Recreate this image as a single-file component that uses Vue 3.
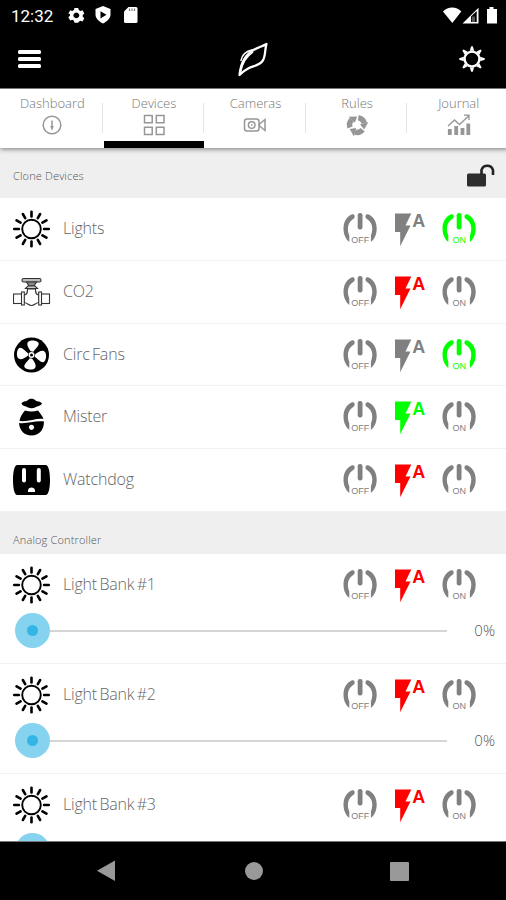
<template>
  <div class="screen">
    <div class="status-bar">
      <span class="clock">12:32</span>
      <svg class="status-left" width="72" height="18" viewBox="0 0 72 18">
        <path fill="#fff" fill-rule="evenodd" d="M6 1h4l.6 2.3 1.8 1 2.2-.7 2 3.3-1.7 1.6v2l1.7 1.6-2 3.4-2.2-.8-1.8 1.1L10 17H6l-.6-2.3-1.8-1-2.2.8-2-3.4 1.7-1.6v-2L-.6 6.9l2-3.3 2.2.7 1.8-1zM8 5.8a3.2 3.2 0 1 0 .01 0z" transform="translate(.9 1) scale(.93)" />
        <path fill="#fff" fill-rule="evenodd" d="M35 0l7.5 3v5.5c0 3.8-3.4 7-7.5 8.900-4.100-1.900-7.500-5.100-7.500-8.900V3zM32.500 5.200v7.200l6-3.600z" />
        <path fill="#fff" d="M60.500 1h7.500a1.500 1.500 0 0 1 1.500 1.500v13a1.500 1.500 0 0 1-1.500 1.500H57.500a1.500 1.500 0 0 1-1.500-1.500V5.500z" />
        <path stroke="#777" stroke-width="1.200" d="M61.500 2.500v2.500M64 2.500v2.500M66.500 2.500v2.500" />
      </svg>
      <svg class="status-right" width="56" height="18" viewBox="0 0 56 18">
        <path fill="#fff" d="M0 4.500C5-.8 13.500-.8 18.300 4.500L9.300 16z" />
        <path fill="#fff" fill-rule="evenodd" d="M19.500 16.500L35.500.7v15.800zM28 9.500V15h5.700V4z" />
        <path fill="#fff" d="M28.800 9.500h3.200V15h-3.200z" opacity=".35" />
        <path fill="#fff" d="M44 2h2.500V0h4v2H54v14.500H44z" />
      </svg>
    </div>

    <header class="header">
      <div class="menu"><i></i><i></i><i></i></div>
      <svg class="leaf" width="34" height="36" viewBox="0 0 34 36">
        <g fill="none" stroke="#fff" stroke-linejoin="round" stroke-linecap="round">
          <path stroke-width="2.300" d="M3.500 34C4.500 24 8 14.500 17.500 9 21 6.800 26 5.500 30.500 3 28.500 9 30 15 26.500 20 23.500 24.500 18 24.500 13 27 9 29 6 31.500 3.500 34z" />
          <path stroke-width="1.500" d="M5 19.500c1-6 5.500-9.500 11.500-10.800M4.500 31C6.500 22 10.500 15.500 16.500 11.500" />
        </g>
      </svg>
      <svg class="gear" width="28" height="28" viewBox="-14 -14 28 28">
        <circle r="7.400" fill="none" stroke="#fff" stroke-width="2.400" />
        <path v-for="n in 8" :key="n" fill="#fff" d="M-2.200 -8.200L-.8 -12.800H.8L2.200 -8.200z" :transform="`rotate(${n * 45})`" />
      </svg>
    </header>

    <nav class="tabs">
      <div v-for="tab in tabs" :key="tab" class="tab" :class="{ active: tab === activeTab }">
        <span class="tab-label">{{ tab }}</span>
        <svg class="tab-icon" width="26" height="24" viewBox="0 0 26 24" fill="none" stroke="#969696" stroke-width="1.500">
          <template v-if="tab === 'Dashboard'">
            <circle cx="13" cy="12" r="8.800" />
            <path d="M13 7.500v7" />
            <path d="M11.300 13h3.400L13 18z" fill="#969696" stroke="none" />
          </template>
          <template v-else-if="tab === 'Devices'">
            <path d="M3.500 2.500h7.700v7.300H3.500zM15.300 2.500H23v7.300h-7.700zM3.500 14.200h7.700v7.300H3.500zM15.300 14.200H23v7.300h-7.700z" />
          </template>
          <template v-else-if="tab === 'Cameras'">
            <rect x="2.500" y="6" width="14.500" height="12" rx="2.500" />
            <circle cx="9.700" cy="12" r="3.300" />
            <path d="M9 12h1.500M17.500 11l5.500-4.500v11L17.500 13z" />
          </template>
          <template v-else-if="tab === 'Rules'">
            <g v-for="n in 3" :key="n" :transform="`translate(13 12) rotate(${n * 120 - 60})`">
              <path d="M-5.700 -4.800A7.500 7.500 0 0 1 2 -7.200" stroke-width="5.400" />
              <path d="M.8 -3L3 -11.400L7.400 -4z" fill="#969696" stroke="none" />
            </g>
          </template>
          <template v-else>
            <path d="M2 13l6.500-6 5 4.500L22.500 3M18 2.200h5V7" stroke-width="1.300" />
            <path d="M3.800 22v-6M10.200 22v-9M16.500 22v-7M22.300 22V10.500" stroke-width="3.800" />
          </template>
        </svg>
      </div>
    </nav>

    <main class="content">
      <template v-for="section in sections" :key="section.title">
        <div class="section-head" :class="{ first: section.lock }">
          <span class="section-title">{{ section.title }}</span>
          <svg v-if="section.lock" class="lock" width="28" height="25" viewBox="0 0 28 25">
            <rect x="0" y="10.500" width="19" height="13" rx="1.500" fill="#2d2d2d" />
            <path d="M14.500 11.500V7a6 6 0 0 1 11.500 0V12" fill="none" stroke="#222" stroke-width="2.600" />
          </svg>
        </div>

        <div v-for="device in section.devices" :key="device.name" class="device" :class="{ analog: section.analog }">
          <div class="device-row">
            <svg class="device-icon" width="38" height="38" viewBox="-18.500 -19 38 38">
              <template v-if="device.icon === 'light'">
                <circle r="9.300" fill="none" stroke="#000" stroke-width="1.900" />
                <path v-for="n in 12" :key="n" d="M0 -12.600V-17.300" stroke="#000" stroke-width="2.600" stroke-linecap="round" :transform="`rotate(${n * 30})`" />
              </template>
              <template v-else-if="device.icon === 'valve'">
                <g fill="#fff" stroke="#333" stroke-width="1.100">
                  <rect x="-18" y="2" width="9" height="9.500" />
                  <rect x="9" y="2" width="9" height="9.500" />
                  <path d="M-7.500 3C-4.500 3-4 1-4-3H4C4 1 4.500 3 7.500 3V10.500C4.500 10.500 3 13.500 0 13.500S-4.500 10.500-7.500 10.500z" />
                  <rect x="-10" y="0" width="2.800" height="13" />
                  <rect x="7.200" y="0" width="2.800" height="13" />
                  <rect x="-9.500" y="-13.500" width="19" height="3.500" rx="1.500" fill="#bbb" />
                  <path d="M-5 -10H5L2.500 -6H-2.500z" fill="#888" />
                  <path d="M-6 -3.500L-3.500 -6H3.500L6 -3.500z" fill="#ccc" />
                </g>
              </template>
              <template v-else-if="device.icon === 'fan'">
                <circle r="17.500" fill="#000" />
                <path v-for="n in 4" :key="n" fill="#fff" d="M-1.200 -3.500C-3.500 -6-6.500 -9-5.500 -12-4 -15.500 4.500 -15.500 5.500 -12.500 6 -9.500 3 -7 1.200 -3.500z" :transform="`rotate(${n * 90 + 8})`" />
                <circle r="3" fill="#fff" />
                <circle r="1.500" fill="#000" />
              </template>
              <template v-else-if="device.icon === 'mister'">
                <path d="M-10 -13.500C-8 -16.500-5 -15-3.500 -17 -2 -18.700 2 -18.700 3.500 -17 5 -15 8 -16.500 10.500 -13.500 9 -10.500 6 -11.500 3.500 -9.500 1.500 -8.500-1.500 -8.500-3.500 -9.500-6 -11.500-9 -10.500-10 -13.500z" />
                <path d="M-6.500 -6.500Q0 -4.500 6.500 -6.500Q11 -1 12 2C4 1-2 5-12 4C-11.500 0-9 -4-6.500 -6.500z" />
                <path fill-rule="evenodd" d="M-12.500 6C-4 7 3 3.500 12.500 4.500 12.500 13 7.500 18.500 0 18.500S-12 13-12.500 6zM0 7.700a2.600 2.600 0 1 0 .01 0z" />
              </template>
              <template v-else>
                <path fill-rule="evenodd" d="M-14 -15H14C17.500 -15 18.500 -7 18.500 0S17.500 15 14 15H-14C-17.500 15-18.500 7-18.500 0S-17.500 -15-14 -15zM-9.500 -10v10.500a2 2 0 0 0 4 0V-10a2 2 0 0 0-4 0zM5.300 -10v10.500a2 2 0 0 0 4 0V-10a2 2 0 0 0-4 0zM-3.500 12H3.500V10.500C3.500 6.500-3.500 6.500-3.500 10.500z" />
              </template>
            </svg>
            <span class="device-name">{{ device.name }}</span>

            <div class="controls">
              <svg class="power" width="34" height="34" viewBox="0 0 34 34">
                <path :d="powerPath" />
                <rect x="14.700" y="0" width="4.800" height="16.500" rx="2.200" />
                <text x="17.200" y="29.800">OFF</text>
              </svg>
              <svg class="bolt" :class="device.auto" width="34" height="42" viewBox="0 -4 34 42">
                <path d="M0 .5H16.300L10.500 12.500H15.500L5.200 33.300V19H0z" />
                <text x="17.200" y="13.700">A</text>
              </svg>
              <svg class="power" :class="{ lit: device.on }" width="34" height="34" viewBox="0 0 34 34">
                <path :d="powerPath" />
                <rect x="14.700" y="0" width="4.800" height="16.500" rx="2.200" />
                <text x="17.200" y="29.800">ON</text>
              </svg>
            </div>
          </div>

          <div v-if="section.analog" class="slider">
            <div class="thumb"><i></i></div>
            <div class="track"></div>
            <span class="percent">{{ device.level }}%</span>
          </div>
        </div>
      </template>
    </main>

    <footer class="nav-bar">
      <svg width="20" height="22" viewBox="0 0 20 22"><path fill="#999" d="M18 .5v20.500L0 10.700z" /></svg>
      <div class="home"></div>
      <div class="recent"></div>
    </footer>
  </div>
</template>

<script setup>
import { ref } from 'vue'

const tabs = ['Dashboard', 'Devices', 'Cameras', 'Rules', 'Journal']
const activeTab = ref('Devices')

const powerPath =
  'M8.500 1.500C3.500 4 .5 9 .5 15.500C.5 21 2.500 26 6.300 29V22.500C4 17 4 10 10.500 5.800C13.200 3.500 11 0 8.500 1.500z' +
  'M25.700 1.500C30.700 4 33.700 9 33.700 15.500C33.700 21 31.700 26 27.900 29V22.500C30.200 17 30.200 10 23.700 5.800C21 3.500 23.200 0 25.700 1.500z'

const sections = ref([
  {
    title: 'Clone Devices',
    lock: true,
    devices: [
      { name: 'Lights', icon: 'light', auto: 'idle', on: true },
      { name: 'CO2', icon: 'valve', auto: 'red', on: false },
      { name: 'Circ Fans', icon: 'fan', auto: 'idle', on: true },
      { name: 'Mister', icon: 'mister', auto: 'green', on: false },
      { name: 'Watchdog', icon: 'outlet', auto: 'red', on: false },
    ],
  },
  {
    title: 'Analog Controller',
    analog: true,
    devices: [
      { name: 'Light Bank #1', icon: 'light', auto: 'red', on: false, level: 0 },
      { name: 'Light Bank #2', icon: 'light', auto: 'red', on: false, level: 0 },
      { name: 'Light Bank #3', icon: 'light', auto: 'red', on: false, level: 0 },
    ],
  },
])
</script>

<style>
body {
  margin: 0;
  background: #000;
}
</style>

<style scoped>
.screen {
  width: 506px;
  height: 900px;
  display: flex;
  flex-direction: column;
  overflow: hidden;
  background: #fff;
  font-family: 'Open Sans', 'Noto Sans', sans-serif;
  font-weight: 300;
}

.status-bar {
  height: 30px;
  flex: none;
  box-sizing: border-box;
  padding: 2px 7px 0 11px;
  display: flex;
  align-items: center;
  background: #000;
  color: #fff;
}

.clock {
  width: 57px;
  font-family: Roboto, sans-serif;
  font-size: 17px;
  font-weight: 400;
  line-height: 20px;
}

.status-left {
  margin-top: -2px;
}

.status-right {
  margin-left: auto;
  margin-top: -1px;
}

.header {
  height: 58px;
  flex: none;
  box-sizing: border-box;
  padding: 0 20px 0 18px;
  display: flex;
  justify-content: space-between;
  align-items: center;
  background: #000;
}

.menu {
  width: 23px;
  margin-right: 7px;
  display: flex;
  flex-direction: column;
  gap: 3px;
}

.menu i {
  height: 4px;
  border-radius: 1.5px;
  background: #fff;
}

.tabs {
  position: relative;
  z-index: 1;
  height: 60px;
  flex: none;
  box-sizing: border-box;
  display: flex;
  gap: 1px;
  margin-right: -3px;
  padding-left: 2px;
  border-top: 1px solid #777;
  background: #fff;
  box-shadow: 0 1px 5px rgba(0, 0, 0, 0.5);
}

.tab {
  flex: 1;
  box-sizing: border-box;
  padding-top: 5px;
  display: flex;
  flex-direction: column;
  align-items: center;
  border-bottom: 7px solid transparent;
  background: linear-gradient(#e4e4e4, #e4e4e4) right 14px / 1px 30px no-repeat;
}

.tab:last-child {
  background: none;
}

.tab.active {
  border-bottom-color: #000;
}

.tab-label {
  color: #777;
  font-size: 13px;
  line-height: 19px;
}

.content {
  flex: 1;
  min-height: 0;
  overflow: hidden;
  box-sizing: border-box;
  border-bottom: 1px solid #777;
}

.section-head {
  height: 42px;
  box-sizing: border-box;
  padding: 13px 11px 0 13px;
  display: flex;
  justify-content: space-between;
  align-items: center;
  background: #efefef;
  color: #555;
  font-size: 11px;
  letter-spacing: 0.15px;
}

.section-head.first {
  height: 50px;
  padding-top: 5px;
}

.device {
  height: 62.8px;
  box-sizing: border-box;
  border-bottom: 1px solid #f1f1f1;
}

.device.analog {
  height: 109.8px;
}

.device-row {
  height: 62px;
  padding: 0 30px 0 13px;
  display: flex;
  align-items: center;
}

.device-name {
  flex: 1;
  margin-left: 12px;
  padding-bottom: 2px;
  color: #666;
  font-size: 16px;
  letter-spacing: -0.2px;
  word-spacing: -1.5px;
}

.controls {
  padding-top: 2px;
  display: flex;
  align-items: center;
  gap: 16px;
}

.power {
  fill: #808080;
}

.power.lit {
  fill: #00ff00;
}

.power text {
  font-family: 'Liberation Sans', sans-serif;
  font-size: 9px;
  font-weight: 400;
  text-anchor: middle;
}

.bolt {
  margin: 0 -3px 0 2px;
  fill: #808080;
}

.bolt.red {
  fill: #ff0000;
}

.bolt.green {
  fill: #00ff00;
}

.bolt text {
  font-family: 'Liberation Sans', sans-serif;
  font-size: 18px;
  font-weight: 700;
}

.slider {
  height: 36px;
  margin-top: -3px;
  padding: 0 11px 0 15px;
  display: flex;
  align-items: center;
}

.thumb {
  width: 35px;
  height: 35px;
  border-radius: 50%;
  display: flex;
  justify-content: center;
  align-items: center;
  background: #85d3ef;
}

.thumb i {
  width: 11px;
  height: 11px;
  border-radius: 50%;
  background: #33b5e5;
}

.track {
  width: 397px;
  height: 2px;
  background: #d5d5d5;
}

.percent {
  margin-left: auto;
  padding-bottom: 2px;
  color: #555;
  font-size: 15px;
}

.nav-bar {
  height: 58px;
  flex: none;
  box-sizing: border-box;
  padding: 0 97px;
  display: flex;
  justify-content: space-between;
  align-items: center;
  background: #000;
}

.home {
  width: 18px;
  height: 18px;
  border-radius: 50%;
  background: #999;
}

.recent {
  width: 19px;
  height: 19px;
  border-radius: 1px;
  background: #999;
}
</style>
